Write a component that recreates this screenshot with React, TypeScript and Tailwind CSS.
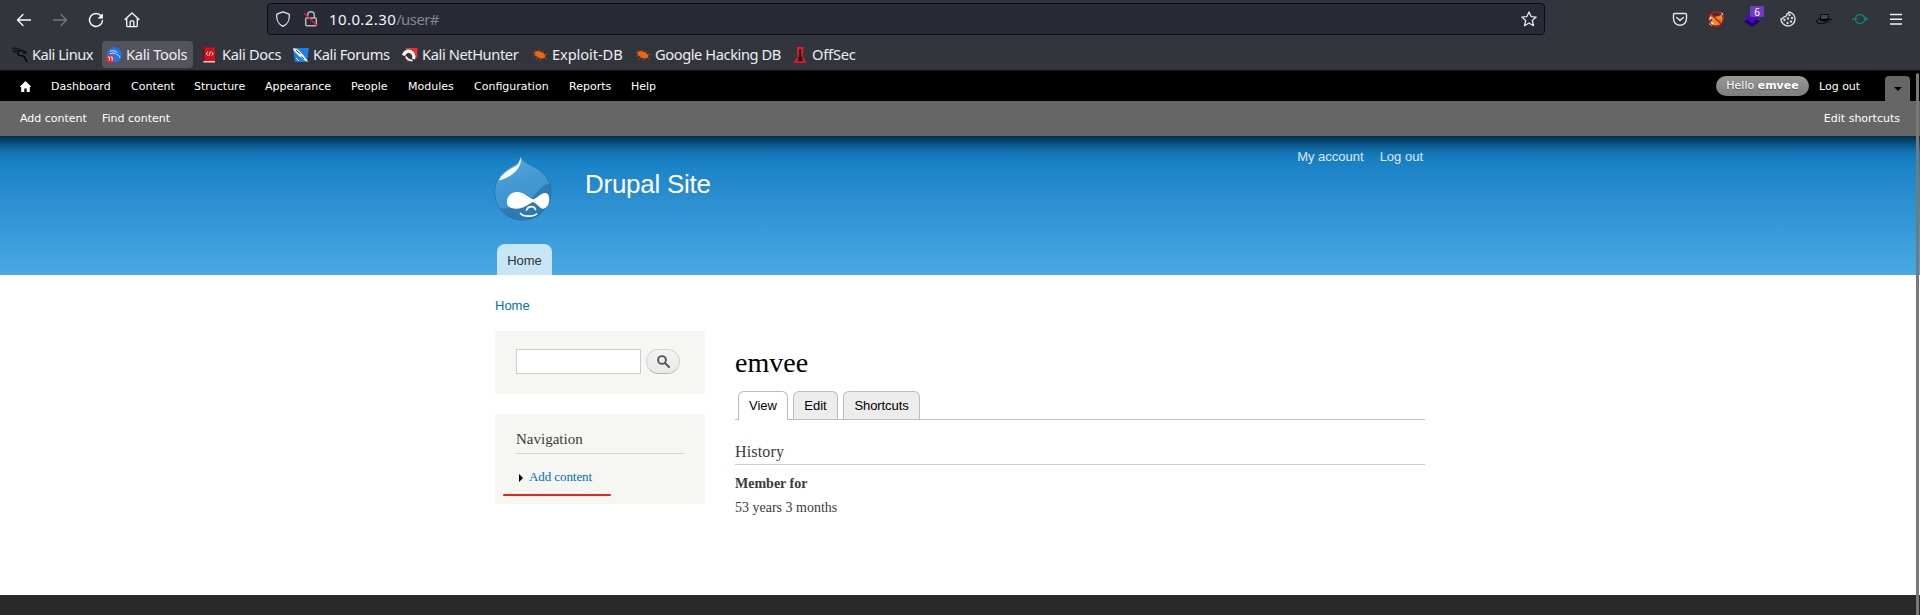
import React from "react";

const sans = "font-['Liberation_Sans',Arial,sans-serif]";
const serif = "font-['Liberation_Serif',Georgia,serif]";
const ui = "font-['Noto_Sans',sans-serif]";
const dejavu = "font-['DejaVu_Sans',sans-serif]";

const Dragon = ({ color }: { color: string }) => (
  <g fill="none" stroke={color} strokeLinecap="round" strokeLinejoin="round">
    <path d="M.7 1.300C4 .8 7 1.400 9 3.500M.8 4.200C3.300 3 6 3.200 8.500 4.200M2 6l2-1" strokeWidth="1" />
    <path d="M6.500 4.500c-1.600 2-.6 3.700 2 4 3.200.2 4.300 1 4.700 2.800.3 1.600 1 2.300 1.800 3.200" strokeWidth="1.500" />
    <path d="M8.700 3.500c2-.6 3.800.6 5.600 2.300L11 5.700" strokeWidth="1.300" />
  </g>
);

const Bug = () => (
  <svg width="16" height="16" viewBox="0 0 16 16">
    <path d="M3 5.200c2-2 5-1.400 8 .9 2.400 1.900 3 3.500 1.600 4.700-2 1.500-6.100.3-8.400-1.700C2.600 7.700 2.200 6.100 3 5.200Z" fill="#f0640f" />
    <path d="M4 5 2.500 3M7 4.500 7 2.500M10 6l2-2M12.500 7.500 15.500 7M4 8.500 1 9M6 10 4 13M9 11l-1 2.500M12.500 10.500l2 2M.5 5.500 3 6" stroke="#b5531c" strokeWidth=".8" fill="none" />
  </svg>
);

const icons: Record<string, React.ReactNode> = {
  linux: <svg width="16" height="16" viewBox="0 0 16 16"><Dragon color="#08090b" /></svg>,
  tools: (
    <svg width="16" height="16" viewBox="0 0 16 16">
      <circle cx="8.3" cy="7.700" r="7.500" fill="#2374ec" />
      <path d="M4 4.500c2.500-1.300 5-1 7.500 1M4 7c3-1.600 6-1 6.500.5 2 .2 3 1.500 3.500 3.500" stroke="#d7e9ff" strokeWidth="1" fill="none" />
      <circle cx="4" cy="11.700" r="4" fill="#ee2b35" />
      <path d="M2 10h1.500v3.500M4.700 10h1.500v3.500" stroke="#fff" strokeWidth="1" fill="none" />
    </svg>
  ),
  docs: (
    <svg width="16" height="16" viewBox="0 0 16 16">
      <path d="M1 .5h12v15H1z" fill="#d40f18" />
      <path d="M1 .5h1.600v13H1z" fill="#6d1119" />
      <path d="M1.500 14H13v1.500H1.500z" fill="#d6d6d9" />
      <path d="M5.800 5 4 6.700l1.800 1.700M9.500 5l1.800 1.700-1.800 1.700M8.300 4.700l-1.300 4" stroke="#fff" strokeWidth="1" fill="none" />
    </svg>
  ),
  forums: (
    <svg width="16" height="16" viewBox="0 0 16 16">
      <path d="M0 1h16l-2 14H2z" fill="#1c7df2" />
      <path d="M0 1.500c3-.5 5 .5 7 3l4 4.500 4.500 6-4.500-2-5-4L1 4z" fill="#fff" />
      <path d="M3 3.200 7.500 7M8 9.500l3 2.500" stroke="#31343c" strokeWidth="1" />
      <path d="m3 11 3 3" stroke="#fff" strokeWidth="1" />
    </svg>
  ),
  nethunter: (
    <svg width="16" height="16" viewBox="0 0 16 16">
      <path d="M3 1h12.500v10L9 8z" fill="#f02b36" />
      <path d="M0 3.500 3 9l2 5.500h3L2 7z" fill="#d31b2b" />
      <path d="M1.500 8.500C3 4 7 3 10 5.500c2 1.500 2.200 4 1.500 6.500" stroke="#fff" strokeWidth="3.200" fill="none" />
      <path d="M4 9.500c1 2.500 3.500 4 6.500 4" stroke="#fff" strokeWidth="2" fill="none" />
      <path d="M6.500 9.800c.5-1.500 1.500-1.500 2.500-.8" stroke="#33353d" strokeWidth="2" fill="none" />
    </svg>
  ),
  bug: <Bug />,
  offsec: (
    <svg width="16" height="16" viewBox="0 0 16 16">
      <path d="M5 0h6.500l-.7 9.500L14.500 16H1.500L5.500 9.500z" fill="#df2027" />
      <path d="M7.200 2h2v7l1.700 2.500-1.500 3H7l-1.400-3L7.200 9z" fill="#260b10" />
      <path d="M4 15.500 7 12M12 15.500l-2.500-3" stroke="#7c151c" />
    </svg>
  ),
};

const bookmarks = [
  { t: "Kali Linux", i: "linux", w: "w-[94px]", s: "tracking-[-0.500px]" },
  { t: "Kali Tools", i: "tools", w: "w-[91px] mr-[5px] bg-[#52535b]", s: "tracking-[-0.300px]" },
  { t: "Kali Docs", i: "docs", w: "w-[91px]", s: "tracking-[-0.350px]" },
  { t: "Kali Forums", i: "forums", w: "w-[109px]", s: "tracking-[-0.400px]" },
  { t: "Kali NetHunter", i: "nethunter", w: "w-[130px]", s: "tracking-[-0.400px]" },
  { t: "Exploit-DB", i: "bug", w: "w-[103px]", s: "tracking-[-0.100px]" },
  { t: "Google Hacking DB", i: "bug", w: "w-[157px]", s: "tracking-[-0.420px]" },
  { t: "OffSec", i: "offsec", w: "w-[90px]", s: "tracking-[-0.200px]" },
];

const menu = [
  { t: "Dashboard", w: "w-[80px]" },
  { t: "Content", w: "w-[63px]" },
  { t: "Structure", w: "w-[71px]" },
  { t: "Appearance", w: "w-[86px]" },
  { t: "People", w: "w-[57px]" },
  { t: "Modules", w: "w-[66px]" },
  { t: "Configuration", w: "w-[95px]" },
  { t: "Reports", w: "w-[62px]" },
  { t: "Help", w: "w-[40px]" },
];

function NavBar() {
  return (
    <div className="flex h-[38px] items-start">
      <div className="flex w-[267px] shrink-0 gap-5 pl-4 pt-3 text-[#fbfbfe]">
        <svg width="16" height="16" viewBox="0 0 16 16" fill="none" stroke="currentColor" strokeWidth="1.3" strokeLinecap="round" strokeLinejoin="round"><path d="M14.500 8H1.500M7 2.500 1.500 8 7 13.500" /></svg>
        <svg className="text-[#74767c]" width="16" height="16" viewBox="0 0 16 16" fill="none" stroke="currentColor" strokeWidth="1.3" strokeLinecap="round" strokeLinejoin="round"><path d="M1.500 8h13M9 2.500 14.500 8 9 13.500" /></svg>
        <svg width="16" height="16" viewBox="0 0 16 16" fill="none"><path d="M13.200 4A6.500 6.500 0 1 0 14.500 8.500" stroke="currentColor" strokeWidth="1.4" strokeLinecap="round" /><path d="M14.900 1.200v5.300H9.600z" fill="currentColor" /></svg>
        <svg width="16" height="16" viewBox="0 0 16 16" fill="none" stroke="currentColor" strokeWidth="1.3" strokeLinecap="round" strokeLinejoin="round"><path d="M1 7.500 8 1l7 6.500M2.700 6.500v7.200c0 .6.300.9.900.9h8.800c.6 0 .9-.3.900-.9V6.500M6.200 14.500V9.800c0-.6.300-.9.900-.9h1.800c.6 0 .9.300.9.900v4.700" /></svg>
      </div>
      <div className="mt-[3px] flex h-8 w-[1278px] shrink-0 items-center rounded-[4px] border border-[#0c0d12] bg-[#282a35] pl-[7px] pr-[7px] text-[#e6e6e9]">
        <svg width="16" height="16" viewBox="0 0 16 16" fill="none" stroke="currentColor" strokeWidth="1.3" strokeLinejoin="round"><path d="M8 .8 14.200 3.200C14.800 8.500 12.500 13.500 8 15.300 3.500 13.500 1.200 8.500 1.800 3.200Z" /></svg>
        <svg className="ml-3" width="16" height="16" viewBox="0 0 16 16" fill="none"><path d="M4.700 7V4a3.300 3.300 0 0 1 6.600 0v3" stroke="#b4b5ba" strokeWidth="1.5" /><rect x="2.700" y="7" width="10.600" height="7.800" rx="1" stroke="#b4b5ba" strokeWidth="1.5" /><path d="m1 2 13.500 13" stroke="#e8174b" strokeWidth="1.4" /></svg>
        <span className={`${ui} ml-[10px] text-[15px] leading-5 tracking-[0.400px] text-[#f4f4f7]`}>10.0.2.30<span className="tracking-[-0.600px] text-[#85868e]">/user#</span></span>
        <svg className="ml-auto" width="16" height="16" viewBox="0 0 16 16" fill="none" stroke="currentColor" strokeWidth="1.3" strokeLinejoin="round"><path d="m8 .9 2.100 4.700 5.100.5-3.900 3.400 1.200 5.200L8 12l-4.500 2.700 1.200-5.200L.8 6.100l5.100-.5z" /></svg>
      </div>
      <div className="ml-[127px] flex gap-5 pt-[11px]">
        <svg width="16" height="16" viewBox="0 0 16 16" fill="none" stroke="#e4e4e7" strokeWidth="1.4" strokeLinecap="round" strokeLinejoin="round"><path d="M2.500 2.500h11c.7 0 1 .4 1 1v4.300c0 3.700-3 6.400-6.500 6.400S1.500 11.500 1.500 7.800V3.500c0-.6.3-1 1-1Z" /><path d="M4.700 6.500 8 9.600l3.300-3.100" /></svg>
        <svg width="16" height="16" viewBox="0 0 16 16"><path d="m2 2 4 4 5-1 4-3 .5 6L12 14l-5 1-6-2 3-4z" fill="#eb8d21" /><path d="m1 4 3 3-3 3M13 1l2 2-1 4zM1 13l3-2 2 1-2 3z" fill="#eee" /><path d="m7 10 5-2 2 3" fill="#d76215" /><circle cx="8" cy="8" r="7.200" fill="none" stroke="#ce1010" strokeWidth="1.2" /><path d="m3 3 10 10" stroke="#ce1010" strokeWidth="1.2" /></svg>
        <div className="relative h-4 w-4">
          <svg width="16" height="16" viewBox="0 0 16 16"><path d="m8 5.500 8 5-8 5.500-8-5.500z" fill="#210078" /><path d="m8 .5 7.500 5.500L8 12 .5 6z" fill="#4c0ab8" /></svg>
          <span className={`${ui} absolute -top-[5px] left-[6px] flex h-[11px] w-[14px] items-center justify-center rounded-[1px] bg-[#6d3cc0] text-[10px] leading-none text-white`}>6</span>
        </div>
        <svg width="16" height="16" viewBox="0 0 16 16" fill="none"><path d="M7 1a7 7 0 1 0 8 7 4 4 0 0 1-3-2 3.500 3.500 0 0 1-3-3A2.500 2.500 0 0 1 7 1Z" stroke="#d6d6d8" strokeWidth="1.5" transform="matrix(-1 0 0 1 16 0)" /><g fill="#d6d6d8"><circle cx="9.500" cy="4" r="1.200" /><circle cx="8" cy="7.500" r="1.200" /><circle cx="12" cy="7" r="1.200" /><circle cx="4.500" cy="9" r="1.200" /><circle cx="7.500" cy="12" r="1.200" /><circle cx="11" cy="10.500" r="1.200" /></g></svg>
        <svg width="16" height="16" viewBox="0 0 16 16" fill="none"><path d="M4.500 3.500h7.700l.3 4.800c-2 1.700-5.500 1.900-8 .9z" fill="#45474d" stroke="#090a0c" /><path d="M4.300 7.200c2 1.300 5.500 1.200 8-.2l.2 2c-2.500 1.600-5.800 1.600-8.300.5z" fill="#050506" /><path d="M4 7.500C1 8.700-.3 10.500 1 11.600c2.500 2 11.500.5 14.500-3.300l-3-.3" stroke="#090a0c" /></svg>
        <svg width="16" height="16" viewBox="0 0 16 16" fill="none" stroke="#107b7d" strokeWidth="1.5"><circle cx="8" cy="8" r="4.600" /><path d="M0 8h5M13 8h3" /><path d="m13 5.500 3 2.500-3 2.500z" fill="#107b7d" stroke="none" /></svg>
        <svg width="16" height="16" viewBox="0 0 16 16" stroke="#f1f1f4" strokeWidth="1.4"><path d="M2 3.500h12M2 8.300h12M2 13h12" /></svg>
      </div>
    </div>
  );
}

function DrupalLogo() {
  return (
    <svg className="mt-5 shrink-0" width="58" height="65" viewBox="0 0 58 65">
      <defs>
        <linearGradient id="drop" x1="0" y1="0" x2=".3" y2="1"><stop offset="0" stopColor="#5eaee0" /><stop offset=".5" stopColor="#4499d3" /><stop offset="1" stopColor="#3b91cb" /></linearGradient>
        <linearGradient id="shine" x1="0" y1="1" x2="1" y2="0"><stop offset="0" stopColor="#fff" /><stop offset=".75" stopColor="#f5fbff" /><stop offset="1" stopColor="#d4eaf8" /></linearGradient>
        <clipPath id="body"><path d="M26.500-1C28.500 6 35 8 42 12c10 6 15 14 15 24 0 16-13 28-28.500 28S.7 52 .7 36.500C.7 24 7 17 16 11 22 8 26 6.500 26.500-1Z" /></clipPath>
      </defs>
      <g clipPath="url(#body)">
        <path d="M0-2h58v67H0z" fill="url(#drop)" />
        <path d="M56 28C50 27 45 34 38 42 26 53 12 54 0 51v14h58V28z" fill="#2670a8" opacity=".7" />
        <path d="M5 24.500C8 16 19 12 24 8.500L27-1C28 7 25 13 18 18.500 13 22 9 23.500 5 24.500Z" fill="url(#shine)" />
      </g>
      <path d="M26.500 0C28.500 6.500 35 8 42 12c10 6 15 14 15 24 0 16-13 28-28.500 28S.7 52 .7 36.500C.7 24 7 17 16 11 22 8 26 6.500 26.500 0Z" fill="none" stroke="#23699b" strokeOpacity=".6" />
      <path d="M12.800 46c0-6 4.700-10 10.700-10 6.500 0 10.500 5.500 15.500 7.500 5-1.800 8-6.500 12-6.500 3 0 4.300 2.500 4.300 6.500 0 5-2.800 9.200-6.300 9.200-3 0-6-5-10-6.700-5 2.500-9.500 6.700-16.500 6.700-5.500 0-9.700-1.700-9.700-6.700Z" fill="#fff" />
      <path d="M32.500 54c2-4.300 7.500-4.300 9-.5M26.500 57.500c3 3.500 13 3.500 16 .5" fill="none" stroke="#fff" strokeWidth="1.700" strokeLinecap="round" />
    </svg>
  );
}

export default function App() {
  return (
    <div className="flex h-[615px] w-[1920px] flex-col overflow-hidden bg-white">
      <div className="h-[71px] shrink-0 border-b border-[#101116] bg-[#33353d]">
        <NavBar />
        <div className={`${ui} flex h-[32px] pl-2 pt-[3px] text-[14.670px] text-[#ededf0]`}>
          {bookmarks.map((b) => (
            <div key={b.t} className={`${b.w} flex h-[27px] shrink-0 items-center gap-1 whitespace-nowrap rounded-[4px] pl-1`}>
              <span className="shrink-0">{icons[b.i]}</span>
              <span className={`${b.s} pb-[2px]`}>{b.t}</span>
            </div>
          ))}
        </div>
      </div>

      <div className="relative flex flex-1 flex-col overflow-hidden">
        <div className={`${dejavu} relative z-10 -mx-8 shrink-0 text-[11px] text-white shadow-[0_3px_20px_#000]`}>
          <div className="flex h-[30px] items-center bg-black pl-[52px] pr-[42px]">
            <svg className="mr-5 shrink-0" width="11" height="11" viewBox="0 0 11 11"><path d="M5.500 0 11 5.500V6H9.800v5H6.700V7.500H4.300V11H1.200V6H0v-.5z" fill="#fff" /></svg>
            {menu.map((m) => <span key={m.t} className={`${m.w} pt-[2px]`}>{m.t}</span>)}
            <span className="ml-auto flex h-5 w-[93px] items-center justify-center rounded-full bg-gradient-to-b from-[#999] to-[#7d7d7d] pt-px [text-shadow:0_1px_1px_#555]">Hello&nbsp;<b>emvee</b></span>
            <span className="ml-[10px] w-[66px] pt-[2px]">Log out</span>
            <span className="mt-[5px] flex h-[25px] w-[25px] items-center justify-center rounded-t-[4px] bg-[#666]">
              <svg width="8" height="4" viewBox="0 0 8 4"><path d="M0 0h8L4 4z" fill="#000" /></svg>
            </span>
          </div>
          <div className="flex h-[35px] items-center bg-[#666] px-[52px] pt-[2px]">
            <span className="w-[82px]">Add content</span><span>Find content</span><span className="ml-auto">Edit shortcuts</span>
          </div>
        </div>

        <header className="h-[139px] shrink-0 bg-gradient-to-b from-[#0779bf] to-[#48a9e4]">
          <div className={`${sans} mx-auto flex h-full w-[932px] flex-col`}>
            <div className="flex h-[108px]">
              <DrupalLogo />
              <h1 className="ml-[33px] mt-8 text-[26px] leading-8 tracking-[-0.270px] text-[#fffeff]">Drupal Site</h1>
              <div className="ml-auto mr-[3px] flex gap-4 pt-[11px] text-[13px] leading-5 text-[#e6f1f8]"><a>My account</a><a>Log out</a></div>
            </div>
            <div className="ml-[3px] flex h-[31px] w-[55px] items-center justify-center rounded-t-[8px] bg-[#c8e5f6] pt-[3px] text-[13px] text-[#333]">Home</div>
          </div>
        </header>

        <main className="mx-auto flex h-[320px] w-[930px] shrink-0 flex-col">
          <div className={`${sans} h-14 pt-[21px] text-[13px] leading-5 text-[#0071b3]`}>Home</div>
          <div className="flex">
            <aside className={`${serif} flex w-[210px] shrink-0 flex-col gap-5`}>
              <div className="flex h-[63px] gap-[5px] bg-[#f6f6f2] pl-[21px] pt-[18px]">
                <div className="h-[25px] w-[125px] border border-[#ccc] bg-white" />
                <div className="flex h-[25px] w-[34px] items-center justify-center rounded-full border border-[#d2d2d2] border-b-[#b4b4b4] bg-gradient-to-b from-[#f4f4f4] to-[#e8e8e8]">
                  <svg width="13" height="13" viewBox="0 0 13 13" fill="none" stroke="#555"><circle cx="5" cy="5" r="3.900" strokeWidth="1.9" /><path d="m8 8 4 4" strokeWidth="2" strokeLinecap="round" /></svg>
                </div>
              </div>
              <div className="h-[90px] bg-[#f6f6f2] px-[21px] pt-[15px]">
                <h2 className="h-[25px] border-b border-[#d3d7d1] text-[15px] leading-5 text-[#3b3b3b]">Navigation</h2>
                <div className="mt-[13px] flex h-5 items-center text-[13px] tracking-[-0.080px] text-[#0071b3]">
                  <svg className="ml-[3px] mr-[6px] mt-px" width="4" height="8" viewBox="0 0 4 8"><path d="M0 0v8l4-4z" fill="#000" /></svg>
                  Add content
                </div>
                <div className="-ml-[13px] mt-[7px] h-[2px] w-[108px] rounded-full bg-[#e62025]" />
              </div>
            </aside>
            <section className={`${serif} ml-[30px] w-[690px] pt-[15px] text-[#3b3b3b]`}>
              <h1 className="h-[45px] text-[28px] leading-[34px] text-black">emvee</h1>
              <div className={`${sans} flex h-[29px] items-stretch gap-[5px] border-b border-[#bbb] pl-[3px] text-[13px] text-black`}>
                <div className="-mb-px flex w-[50px] items-center justify-center rounded-t-[6px] border border-b-0 border-[#bbb] bg-white">View</div>
                <div className="flex w-[45px] items-center justify-center rounded-t-[6px] border border-b-0 border-[#bbb] bg-[#ededed]">Edit</div>
                <div className="flex w-[77px] items-center justify-center rounded-t-[6px] border border-b-0 border-[#bbb] bg-[#ededed] tracking-[-0.080px]">Shortcuts</div>
              </div>
              <h2 className="mt-[20px] h-[25px] border-b border-[#ccc] text-[16px] leading-6 tracking-[0.150px]">History</h2>
              <div className="mt-[7px] text-[14px] font-bold leading-6">Member for</div>
              <div className="text-[14px] leading-6">53 years 3 months</div>
            </section>
          </div>
        </main>
        <footer className="flex-1 bg-[#292929]" />
        <div className="absolute bottom-0 right-px top-[2px] z-20 w-[3px] rounded-t-full bg-[#747a77]" />
      </div>
    </div>
  );
}
